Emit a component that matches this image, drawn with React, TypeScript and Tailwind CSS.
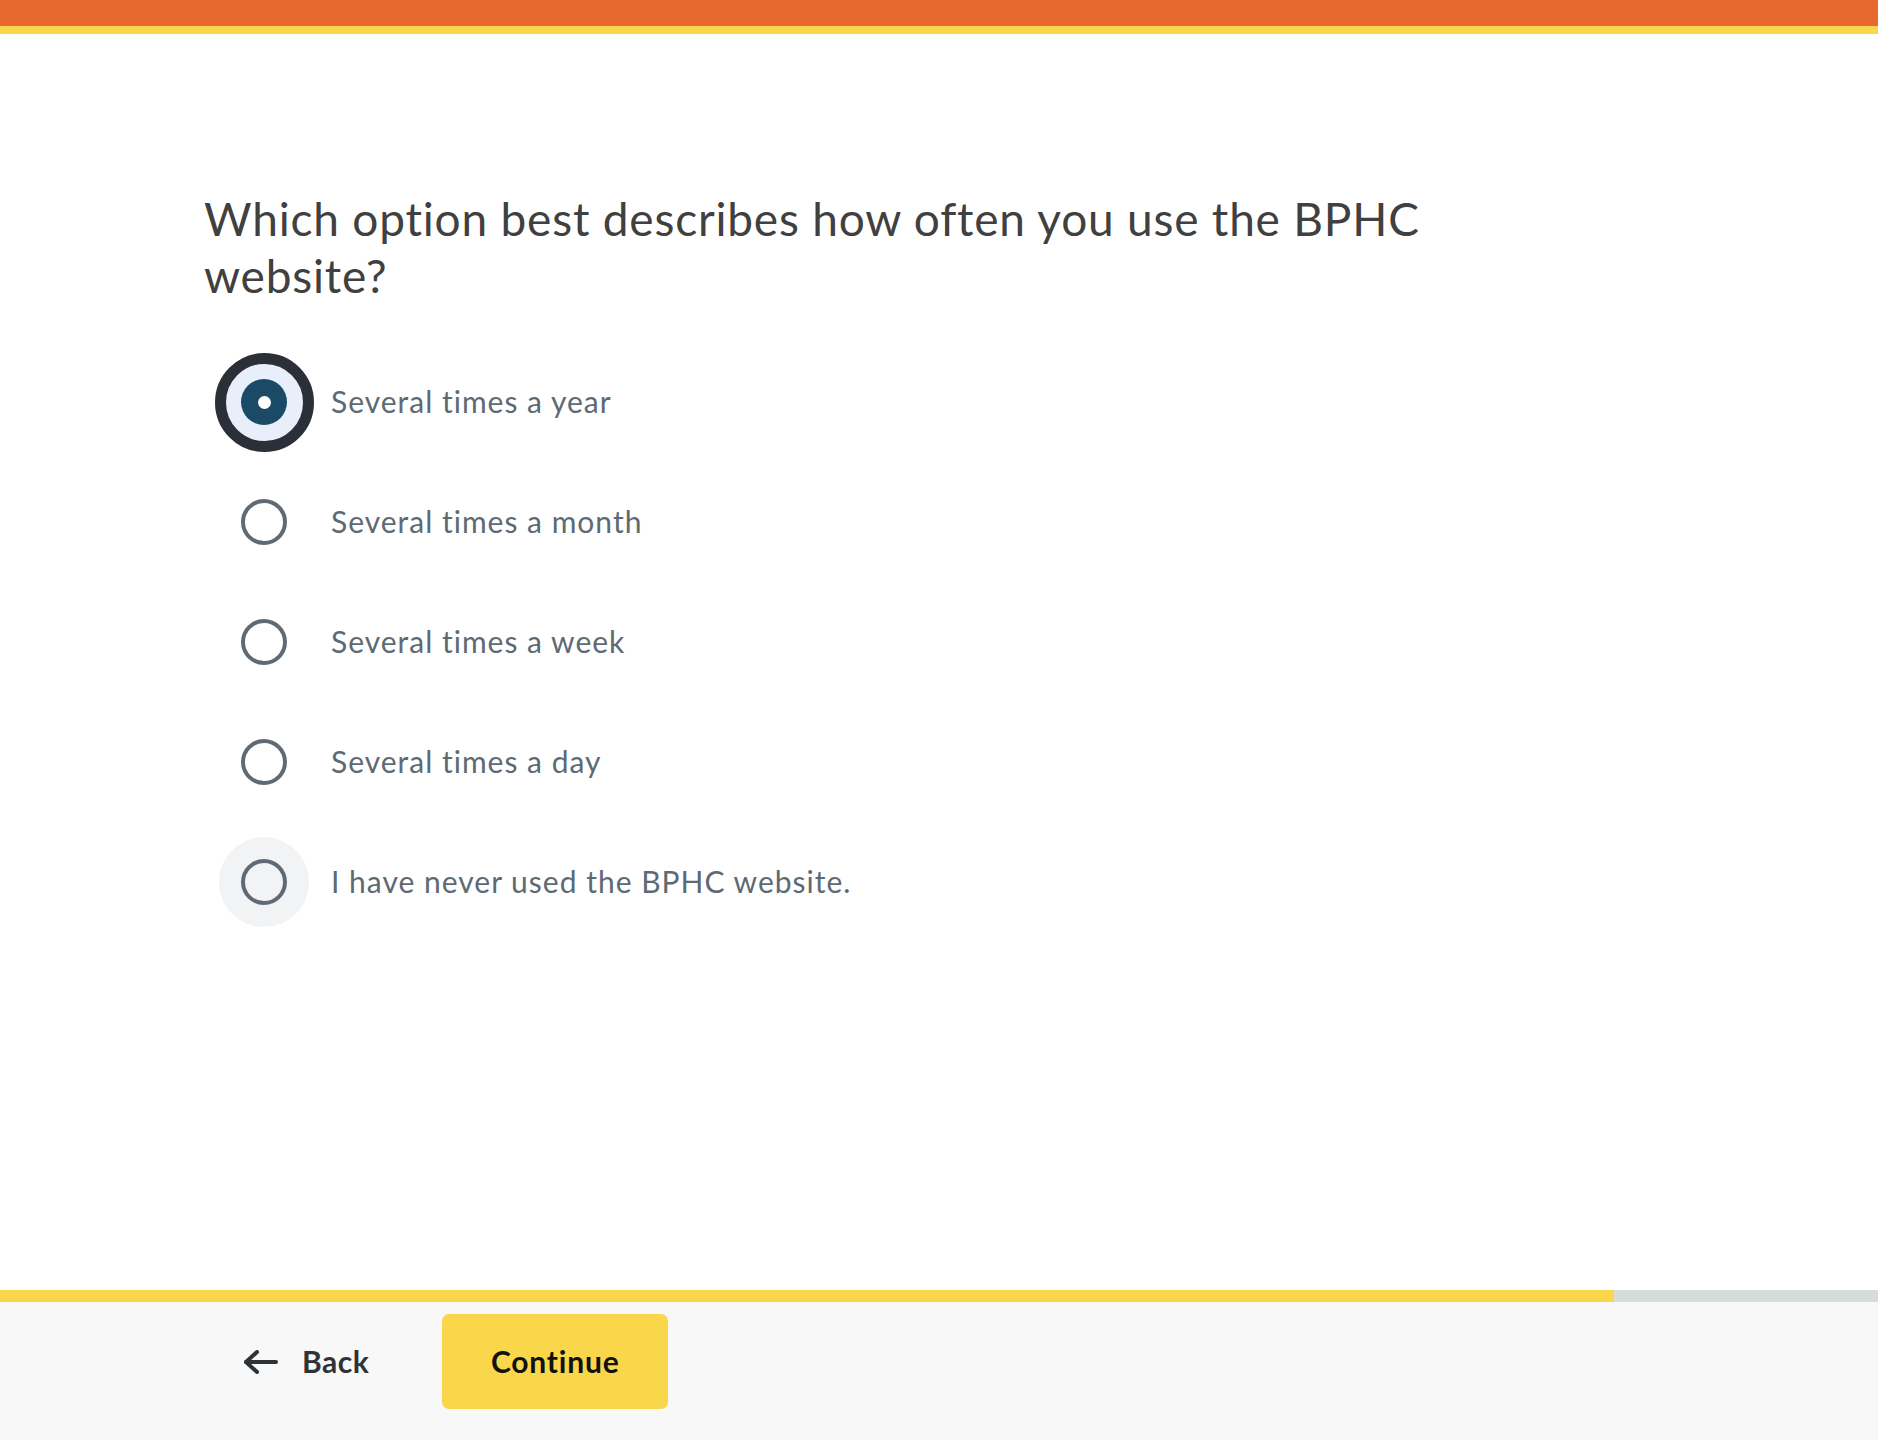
const options = [
  "Several times a year",
  "Several times a month",
  "Several times a week",
  "Several times a day",
  "I have never used the BPHC website.",
]

const Radio = ({ state }: { state: "selected" | "idle" | "hover" }) => {
  if (state === "selected") {
    return (
      <span className="w-[99px] h-[99px] rounded-full border-[11px] border-[#2b3038] bg-[#e9effa] flex items-center justify-center">
        <span className="w-[46px] h-[46px] rounded-full bg-[#1b4a66] flex items-center justify-center">
          <span className="w-[13px] h-[13px] rounded-full bg-white" />
        </span>
      </span>
    )
  }
  return (
    <span className={`w-[90px] h-[90px] rounded-full flex items-center justify-center ${state === "hover" ? "bg-[#f2f3f5]" : ""}`}>
      <span className="w-[46px] h-[46px] rounded-full border-4 border-[#5f6a74]" />
    </span>
  )
}

const App = () => {
  return (
    <div className="h-[1440px] flex flex-col bg-white font-['Lato',sans-serif]">
      {/* top stripe */}
      <div className="h-[26px] bg-[#e8692d]" />
      <div className="h-[8px] bg-[#fad64a]" />

      <main className="flex-1 pl-[204px] pt-[156px]">
        <h1 className="w-[1260px] text-[46px] leading-[57px] tracking-[0.8px] text-[#404040]">
          Which option best describes how often you use the BPHC website?
        </h1>

        <div className="mt-[38px] ml-[10px] flex flex-col">
          {options.map((label, i) => (
            <div key={label} className="h-[120px] flex items-center">
              <div className="w-[100px] h-[100px] flex items-center justify-center">
                <Radio state={i === 0 ? "selected" : i === 4 ? "hover" : "idle"} />
              </div>
              <span className="ml-[17px] -mt-[2px] text-[30px] tracking-[1px] text-[#5e6a73]">{label}</span>
            </div>
          ))}
        </div>
      </main>

      {/* progress */}
      <div className="h-[12px] flex">
        <div className="w-[1614px] bg-[#fad64a]" />
        <div className="flex-1 bg-[#d5dcdd]" />
      </div>

      <footer className="h-[138px] bg-[#f8f8f8] pt-[12px] pl-[244px] flex items-start gap-[73px]">
        <button className="h-[95px] flex items-center gap-[24px] text-[#2e3338] font-bold text-[30px] tracking-[0.5px]">
          <svg width="34" height="24" viewBox="0 0 34 24" fill="none" stroke="currentColor" strokeWidth="4" strokeLinecap="round" strokeLinejoin="round">
            <path d="M32 12H2" />
            <path d="M13 2 2 12l11 10" />
          </svg>
          Back
        </button>
        <button className="w-[226px] h-[95px] rounded-[7px] bg-[#fad64a] text-[#111] font-bold text-[30px] tracking-[0.8px]">
          Continue
        </button>
      </footer>
    </div>
  )
}

export default App
